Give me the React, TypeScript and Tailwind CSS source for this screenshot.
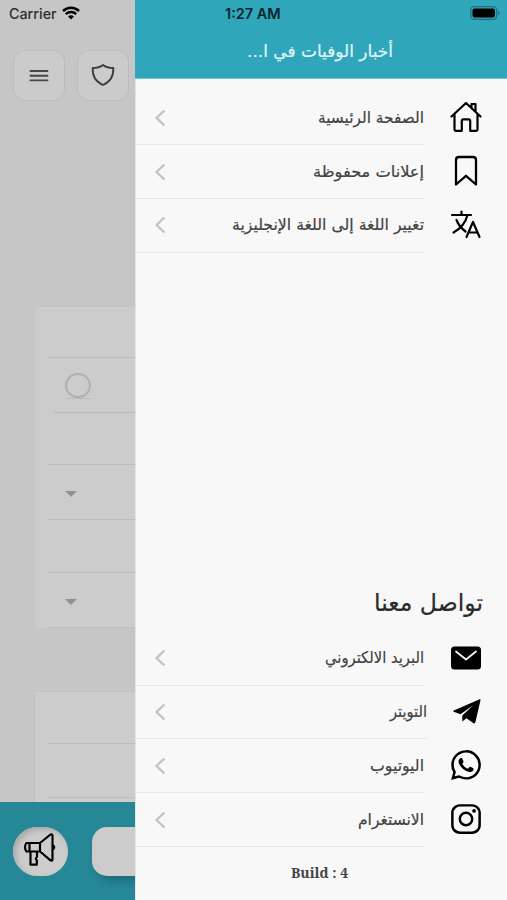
import React from 'react';
import { IoLogoInstagram, IoLogoWhatsapp } from 'react-icons/io5';

interface MenuItem {
  title: string;
  icon: React.ReactNode;
  width: number;
  wide?: boolean;
}

const HomeIcon = () => (
  <svg width="32" height="32" viewBox="0 0 32 32" fill="none" stroke="currentColor" strokeWidth="2.200" strokeLinecap="round" strokeLinejoin="round">
    <path d="M1.500 15.500L16 2l14.500 13.500M4.500 13v15.500c0 .8.500 1.300 1.300 1.300h6V20c0-1 .7-1.700 1.700-1.700h5c1 0 1.700.7 1.700 1.700v9.800h6c.8 0 1.300-.5 1.300-1.300V13M21.500 6.500V3h4v7.500" />
  </svg>
);

const BookmarkIcon = () => (
  <svg width="24" height="32" viewBox="0 0 24 32" fill="none" stroke="currentColor" strokeWidth="2.300" strokeLinejoin="round">
    <path d="M2 29.500V5c0-1.700 1.300-3 3-3h14c1.700 0 3 1.300 3 3v24.500l-10-8.700z" />
  </svg>
);

const LanguageIcon = () => (
  <svg width="32" height="30" viewBox="0 0 32 30" fill="none" stroke="currentColor" strokeWidth="2.200" strokeLinecap="round" strokeLinejoin="round">
    <path d="M2 5h19M11.500 1.500V5M17.500 5C15.500 13 10 19 3.500 22.500M6.500 10c2 5 5 8.500 9 11.500M16.500 27l6.500-15 6.500 15M18.500 22.500h9" />
  </svg>
);

const ChevronIcon = () => (
  <svg width="10" height="16" viewBox="0 0 10 16" fill="none" stroke="#c3c3c3" strokeWidth="2.300" strokeLinecap="round" strokeLinejoin="round">
    <path d="M8.700 1.200L1.500 8l7.200 6.800" />
  </svg>
);

const MailIcon = () => (
  <svg width="30" height="24" viewBox="0 0 30 24">
    <rect x="0" y="0.5" width="30" height="23" rx="3.5" />
    <path d="M5 5.500l10 8 10-8" fill="none" stroke="#f8f8f8" strokeWidth="1.800" strokeLinecap="round" strokeLinejoin="round" />
  </svg>
);

const PlaneIcon = () => (
  <svg width="28" height="25" viewBox="0 0 28 25">
    <path d="M26.700.3L.8 11.500c-.7.300-.7 1 0 1.300l6.700 2.400L20.500 6 9.300 16.400v6.100l4.200-3.300 7 5c.7.500 1.600.2 1.800-.6l5.200-22.400c.1-.6-.3-1.100-.8-.9z" />
  </svg>
);

const MegaphoneIcon = () => (
  <svg className="-ml-1 -mt-0.5" width="34" height="34" viewBox="0 0 34 34" fill="none" stroke="#000" strokeWidth="2.200" strokeLinejoin="round">
    <path d="M4.500 10H18v8.500H4.500c-2-1.800-2-6.700 0-8.500zM7.500 10v8.500M18 10L28.500 1.500c1.500-.6 2 .2 2 1.200v23.600c0 1-.8 1.700-2 1L18 18.500M8.500 18.500v13.200h6.300v-4.500c-1.300-1-1.300-2 .2-3.200v-5.500" />
    <path d="M31 11.500c3 .5 3 5 0 5.500z" fill="#000" stroke="none" />
  </svg>
);

const mainItems: MenuItem[] = [
  { title: 'الصفحة الرئيسية', icon: <HomeIcon />, width: 106 },
  { title: 'إعلانات محفوظة', icon: <BookmarkIcon />, width: 111 },
  { title: 'تغيير اللغة إلى اللغة الإنجليزية', icon: <LanguageIcon />, width: 192 },
];

const contactItems: MenuItem[] = [
  { title: 'البريد الالكتروني', icon: <MailIcon />, width: 99 },
  { title: 'التويتر', icon: <PlaneIcon />, width: 37, wide: true },
  { title: 'اليوتيوب', icon: <IoLogoWhatsapp size={34} />, width: 54 },
  { title: 'الانستغرام', icon: <IoLogoInstagram size={34} />, width: 66 },
];

interface LabelProps {
  text: string;
  width: number;
  size: number;
  color: string;
}

// Arabic label kept to a fixed advance width
const Label: React.FC<LabelProps> = ({ text, width, size, color }) => (
  <svg className="block overflow-visible" width={width} height="24">
    <text
      x={width}
      y="17"
      direction="rtl"
      textLength={width}
      lengthAdjust="spacingAndGlyphs"
      fontFamily="'DejaVu Sans', sans-serif"
      fontSize={size}
      fill={color}
      stroke={color}
      strokeWidth="0.2"
    >
      {text}
    </text>
  </svg>
);

const MenuRow: React.FC<{ item: MenuItem }> = ({ item }) => (
  <div className="flex h-[53.8px]">
    <div className={`flex items-center justify-between border-b border-[#e7e7e7] pl-[19px] ${item.wide ? 'w-[292px]' : 'w-[289px]'}`}>
      <ChevronIcon />
      <Label text={item.title} width={item.width} size={16} color="#414141" />
    </div>
    <div className={`flex items-center justify-center pb-[2px] text-black ${item.wide ? 'w-[80px]' : 'w-[83px]'}`}>{item.icon}</div>
  </div>
);

const SelectArrow = () => (
  <svg className="mt-1" width="12" height="6" viewBox="0 0 12 6" fill="#919191">
    <path d="M0 0h12L6 6z" />
  </svg>
);

const App: React.FC = () => {
  return (
    <div className="flex h-[900px] w-[507px] overflow-hidden bg-[#f8f8f8] font-['Inter',sans-serif]">
      {/* Dimmed page behind the drawer */}
      <div className="flex w-[135px] shrink-0 flex-col overflow-hidden bg-[#c6c6c6]">
        <div className="flex h-[50px] gap-1.5 pl-[9px] pt-[5px] text-[14.300px] font-medium leading-[18px] text-[#2e2e2e]">
          <span>Carrier</span>
          <svg className="-ml-px mt-px" width="18" height="14" viewBox="0 0 18 14" fill="none" stroke="#000" strokeWidth="2.500">
            <path d="M1 5a11.500 11.500 0 0116 0M3.800 8.200a7.500 7.500 0 0110.400 0" />
            <path d="M6 10.500a4.500 4.500 0 016 0l-3 3z" fill="#000" stroke="none" />
          </svg>
        </div>
        <div className="flex gap-[12px] pl-[13px]">
          <div className="flex h-[51px] w-[52px] shrink-0 items-center justify-center rounded-xl border-[1.500px] border-[#bcbcbc] bg-[#cbcbcb]">
            <svg width="20" height="14" viewBox="0 0 20 14" fill="none" stroke="#464646" strokeWidth="1.900" strokeLinecap="round">
              <path d="M1.500 2h17M1.500 6.700h17M1.500 11.400h17" />
            </svg>
          </div>
          <div className="flex h-[51px] w-[52px] shrink-0 items-center justify-center rounded-xl border-[1.500px] border-[#bcbcbc] bg-[#cbcbcb]">
            <svg className="-ml-px -mt-px" width="24" height="24" viewBox="0 0 24 24" fill="none" stroke="#3b3b3b" strokeWidth="1.800" strokeLinejoin="round">
              <path d="M12 2C9 4.200 5.300 5 1.700 5c-.5 8 3 13.700 10.300 17C19.300 18.700 22.800 13 22.300 5 18.700 5 15 4.200 12 2z" />
            </svg>
          </div>
        </div>

        <div className="ml-[34px] mt-[205px] h-[322px] border-l border-t border-[#c4c4c4] bg-[#cccccc] pl-[13px]">
          <div className="h-[51px] border-b border-[#bdbdbd]" />
          <div className="ml-1.5 h-[55px] border-b border-[#b7b7b7] pl-[11px] pt-[15px]">
            <div className="h-[26px] w-[26px] border-b border-[#bbbbbb]">
              <div className="h-[25px] w-[26px] rounded-full border-2 border-[#b0b0b0]" />
            </div>
          </div>
          <div className="h-[52px] border-b border-[#bdbdbd]" />
          <div className="flex h-[55px] items-center border-b border-[#bdbdbd] pl-[17px]">
            <SelectArrow />
          </div>
          <div className="h-[53px] border-b border-[#bdbdbd]" />
          <div className="flex h-[55px] items-center border-b border-[#bfbfbf] pl-[17px]">
            <SelectArrow />
          </div>
        </div>

        <div className="ml-[34px] mt-[63px] h-[111px] border-l border-t border-[#c1c1c1] bg-[#cccccc] pl-[13px]">
          <div className="h-[52px] border-b border-[#bdbdbd]" />
          <div className="h-[54px] border-b border-[#c0c0c0]" />
        </div>

        <div className="flex h-[98px] shrink-0 items-center gap-6 bg-[#268797] pl-[13px]">
          <div className="flex h-[49px] w-[55px] shrink-0 items-center justify-center rounded-full bg-[#cccccc] shadow-[inset_3px_3px_5px_#aaaaaa]">
            <MegaphoneIcon />
          </div>
          <div className="h-[49px] w-20 shrink-0 rounded-[15px] bg-[#cccccc] shadow-[4px_5px_8px_rgba(0,0,0,0.2)]" />
        </div>
      </div>

      {/* Drawer */}
      <div className="flex w-[372px] shrink-0 flex-col border-l border-[#e4e4e4] bg-[#f8f8f8]">
        <div className="-ml-px h-[79px] shrink-0 border-b border-[#75c5d2] bg-[#30a6ba]">
          <div className="flex h-7 items-center justify-between pl-[90px] pr-[6px]">
            <span className="text-[14.500px] font-semibold leading-7 text-[#062429]">1:27 AM</span>
            <svg className="-mt-0.5" width="31" height="14" viewBox="0 0 31 14">
              <rect x="0.700" y="0.700" width="26" height="12.600" rx="3.500" fill="none" stroke="#197182" strokeWidth="1.300" />
              <rect x="2.500" y="2.500" width="22.400" height="9" rx="2" />
              <path d="M28.300 4.800c2 .7 2 3.700 0 4.400z" fill="#197182" />
            </svg>
          </div>
          <div className="flex justify-end pr-[114px] pt-[12px]">
            <Label text="أخبار الوفيات في ا..." width={146} size={16.5} color="#e4f6f9" />
          </div>
        </div>

        <div className="mt-[12.500px]">
          {mainItems.map((item) => <MenuRow key={item.title} item={item} />)}
        </div>

        <div className="mt-[341px] flex justify-end pr-6">
          <Label text="تواصل معنا" width={109} size={24} color="#2b2b2b" />
        </div>
        <div className="mt-[14px]">
          {contactItems.map((item) => <MenuRow key={item.title} item={item} />)}
        </div>
        <div className="mt-[14px] pr-1 text-center font-['Noto_Serif','Liberation_Serif',serif] text-[14px] font-bold leading-6 text-[#444444]">
          Build : 4
        </div>
      </div>
    </div>
  );
};

export default App;
